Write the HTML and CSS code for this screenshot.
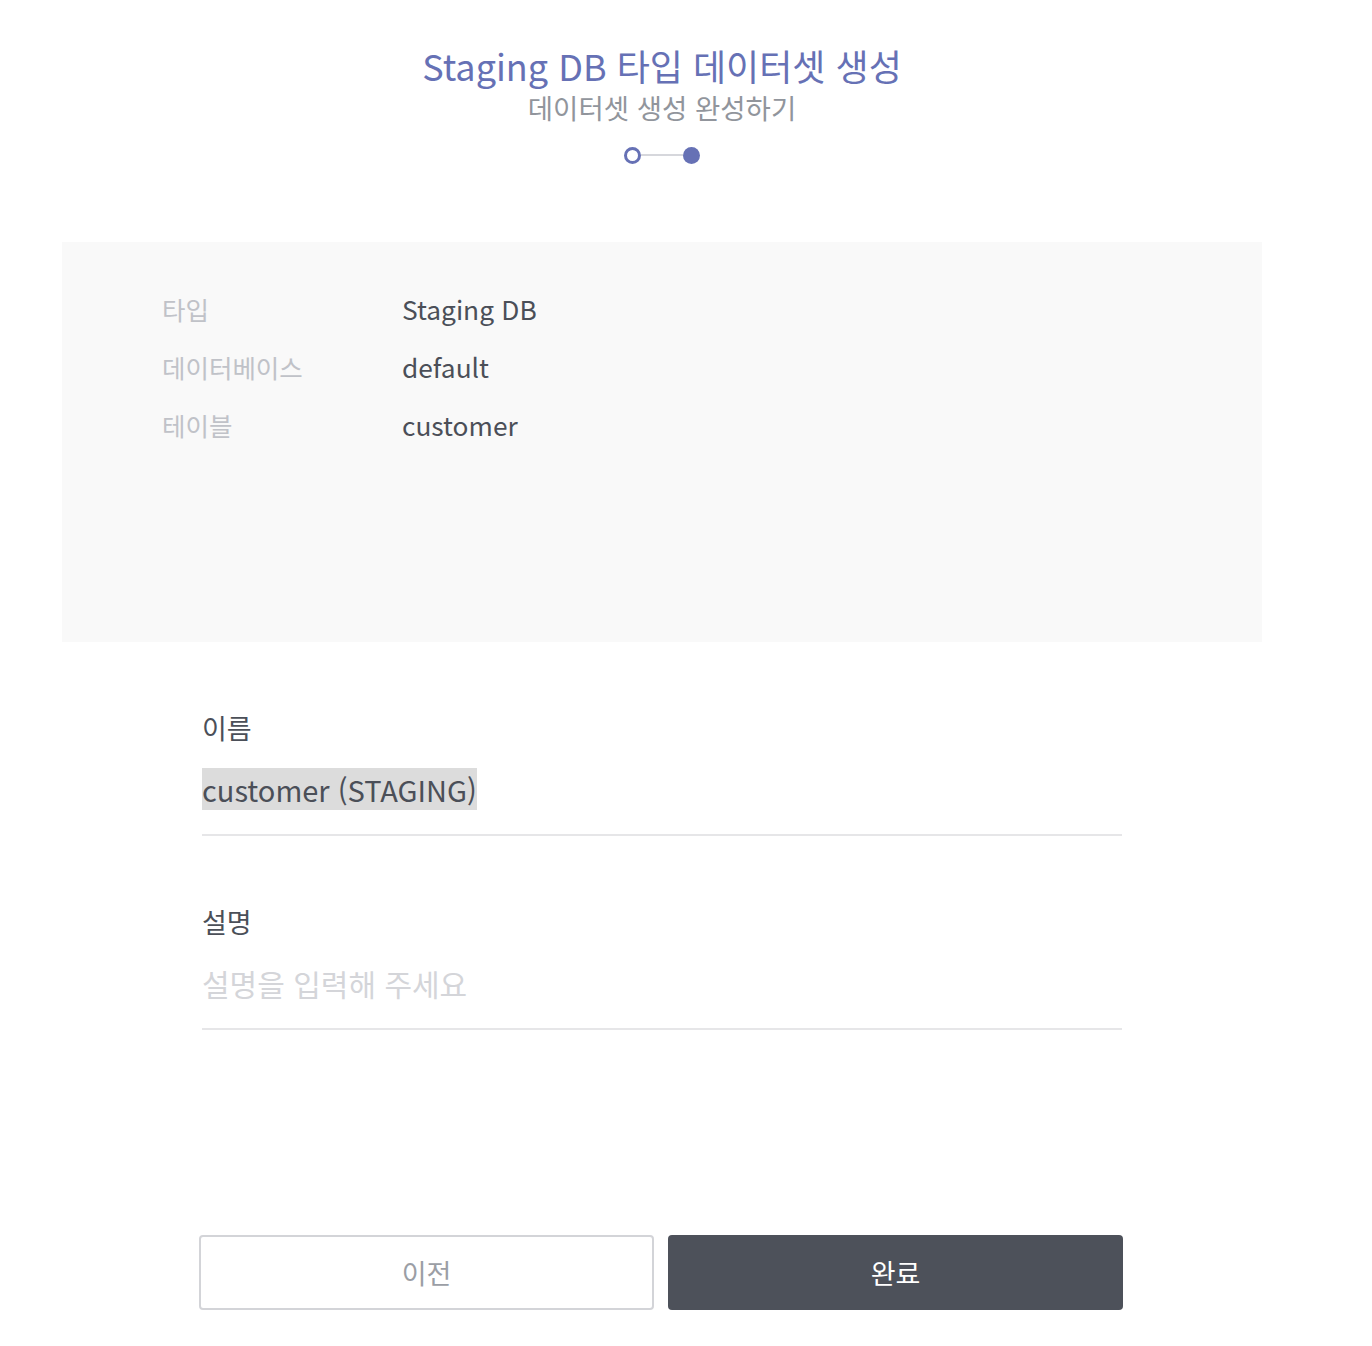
FILE: index.html
```html
<!DOCTYPE html>
<html lang="ko">
<head>
<meta charset="utf-8">
<title>Staging DB 타입 데이터셋 생성</title>
<link rel="stylesheet" href="styles.css">
</head>
<body>
<div class="page">
  <header class="header">
    <h1 class="title">Staging DB 타입 데이터셋 생성</h1>
    <p class="subtitle">데이터셋 생성 완성하기</p>
    <div class="stepper">
      <span class="step step-done"></span>
      <span class="step-line"></span>
      <span class="step step-current"></span>
    </div>
  </header>

  <section class="summary">
    <div class="summary-row"><span class="summary-label">타입</span><span class="summary-value">Staging DB</span></div>
    <div class="summary-row"><span class="summary-label">데이터베이스</span><span class="summary-value">default</span></div>
    <div class="summary-row"><span class="summary-label">테이블</span><span class="summary-value">customer</span></div>
  </section>

  <form class="form">
    <div class="field">
      <label class="field-label">이름</label>
      <div class="field-input"><span class="selected">customer (STAGING)</span></div>
    </div>
    <div class="field">
      <label class="field-label">설명</label>
      <div class="field-input placeholder">설명을 입력해 주세요</div>
    </div>
  </form>

  <div class="actions">
    <button class="btn btn-prev" type="button">이전</button>
    <button class="btn btn-done" type="button">완료</button>
  </div>
</div>
</body>
</html>
```

FILE: styles.css
```css
* { box-sizing: border-box; }
html, body { margin: 0; padding: 0; background: #fff; }
body {
  font-family: "Noto Sans CJK KR", "Noto Sans", sans-serif;
  color: #4b4f58;
}
.page {
  width: 1200px;
  margin-left: 62px;
}
.header {
  padding-top: 42px;
  display: flex;
  flex-direction: column;
  align-items: center;
}
.title {
  margin: 0;
  font-size: 36px;
  font-weight: 400;
  line-height: 46px;
  color: #6671b5;
}
.subtitle {
  margin: 2px 0 0;
  font-size: 27.5px;
  line-height: 34px;
  color: #91959c;
}
.stepper {
  margin-top: 23px;
  display: flex;
  align-items: center;
  height: 16px;
}
.step {
  width: 17px;
  height: 17px;
  border-radius: 50%;
}
.step-done {
  border: 3px solid #6671b5;
  background: #fff;
}
.step-current {
  background: #6671b5;
}
.step-line {
  width: 42px;
  height: 2px;
  background: #d6d7dc;
}
.summary {
  margin-top: 79px;
  height: 400px;
  background: #f9f9f9;
  padding: 37px 0 0 100px;
}
.summary-row {
  display: flex;
  align-items: center;
  height: 58px;
}
.summary-label {
  width: 240px;
  font-size: 25.5px;
  color: #c0c2c8;
}
.summary-value {
  font-size: 26.3px;
  color: #4b4f58;
}
.form {
  width: 920px;
  margin: 68px 0 0 140px;
}
.field + .field { margin-top: 68px; }
.field-label {
  display: block;
  font-size: 27px;
  line-height: 36px;
  color: #4b4f58;
}
.field-input {
  margin-top: 21px;
  font-size: 29px;
  line-height: 44px;
  padding-bottom: 23px;
  border-bottom: 2px solid #e6e6e8;
  color: #4b4f58;
}
.selected { background: #dcdcdc; }
.placeholder { color: #d4d5d9; font-size: 30px; }
.actions {
  margin: 205px 0 0 137px;
  display: flex;
  gap: 14px;
}
.btn {
  width: 455px;
  height: 75px;
  padding: 0;
  margin: 0;
  border-radius: 4px;
  font-family: inherit;
  font-size: 27px;
}
.btn-prev {
  background: #fff;
  border: 2px solid #d3d4d8;
  color: #9b9ea5;
}
.btn-done {
  background: #4d515a;
  border: none;
  color: #fff;
}
```
